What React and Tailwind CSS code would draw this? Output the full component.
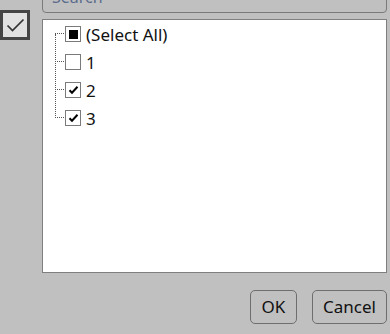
import React from 'react';

const font = { fontFamily: '"Noto Sans", "Open Sans", sans-serif' };

function Box({ state }) {
  return (
    <span className="w-[16px] h-[16px] border border-[#7a7a7a] bg-white flex items-center justify-center shrink-0">
      {state === 'partial' && <span className="w-[9px] h-[9px] bg-black" />}
      {state === 'checked' && (
        <svg width="11" height="10" viewBox="0 0 11 10">
          <path d="M1.5 5.2 L4 7.8 L9.5 1.8" fill="none" stroke="#000" strokeWidth="2" />
        </svg>
      )}
    </span>
  );
}

const items = [
  { label: '(Select All)', state: 'partial' },
  { label: '1', state: 'none' },
  { label: '2', state: 'checked' },
  { label: '3', state: 'checked' },
];

export default function App() {
  return (
    <div className="w-[390px] h-[334px] bg-[#c0c0c0] overflow-hidden flex text-[#111]" style={font}>
      <div className="w-[42px] shrink-0 pt-[10px]">
        <div className="w-[30px] h-[30px] border-[3px] border-[#454545] bg-[#e1e1e1] flex items-center justify-center">
          <svg width="19" height="15" viewBox="0 0 19 15">
            <path d="M1.5 7.5 L6.5 12.5 L17.5 1.5" fill="none" stroke="#333" strokeWidth="1.7" />
          </svg>
        </div>
      </div>
      <div className="w-[345px] flex flex-col">
        <div className="h-[31px] -mt-[18px] border border-[#7a7a7a] rounded-[4px] px-[9px] pt-[2px] text-[16px] text-[#5b6b8c]">
          Search
        </div>
        <div className="mt-[6px] h-[254px] bg-white border border-[#7f7f7f] relative pl-[22px]">
          <div className="absolute left-[12px] top-[14px] h-[84px] border-l border-dotted border-[#555]" />
          {items.map((it) => (
            <div key={it.label} className="h-[28px] flex items-center relative">
              <div className="absolute -left-[10px] top-[13px] w-[9px] border-t border-dotted border-[#555]" />
              <Box state={it.state} />
              <span className="ml-[5px] text-[17px] leading-none">{it.label}</span>
            </div>
          ))}
        </div>
        <div className="flex justify-end gap-[15px] mt-[17px]">
          <button className="w-[47px] h-[34px] border border-[#6e6e6e] rounded-[5px] text-[17px]">OK</button>
          <button className="w-[75px] h-[34px] border border-[#6e6e6e] rounded-[5px] text-[17px]">Cancel</button>
        </div>
      </div>
    </div>
  );
}
